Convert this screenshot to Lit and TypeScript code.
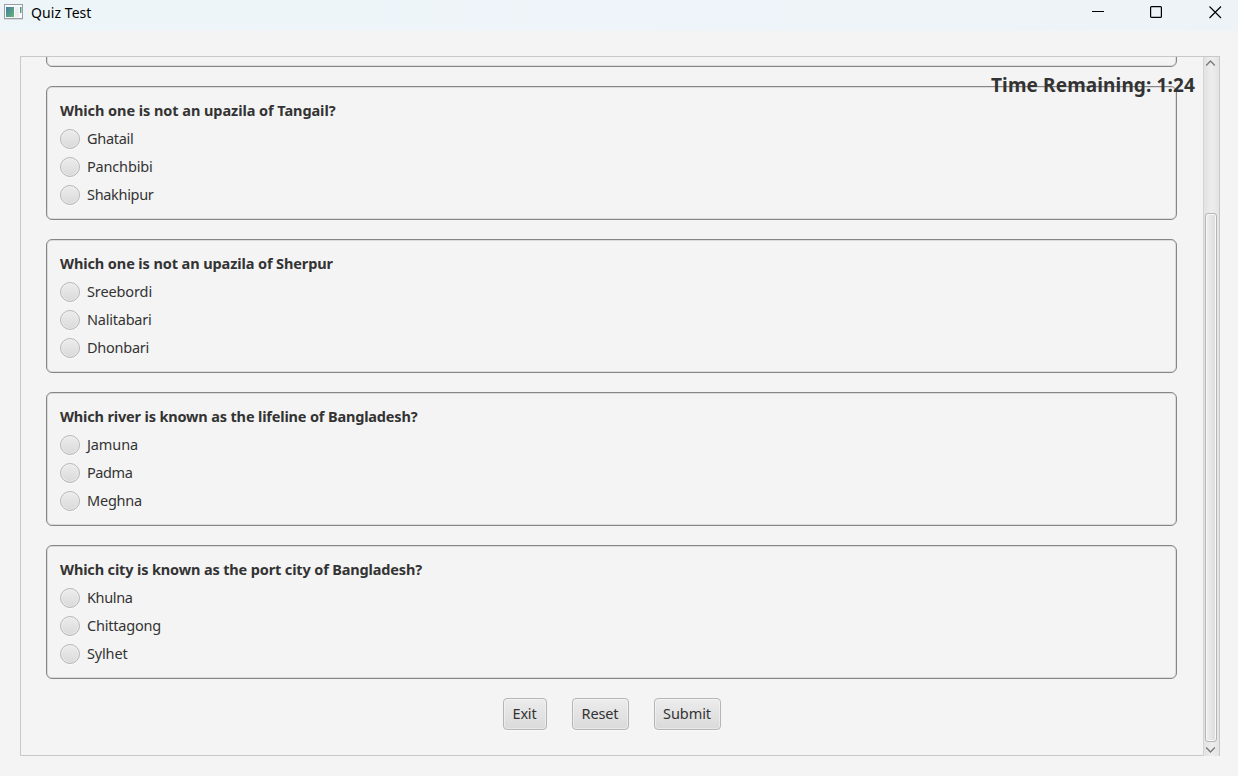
import { LitElement, html, css, svg } from "lit";
import { customElement } from "lit/decorators.js";

type Label = [text: string, width: number];

interface Question {
  title: Label;
  options: Label[];
}

const QUESTIONS: Question[] = [
  {
    title: ["Which one is not an upazila of Tangail?", 275.5],
    options: [["Ghatail", 46.5], ["Panchbibi", 65.5], ["Shakhipur", 66.5]],
  },
  {
    title: ["Which one is not an upazila of Sherpur", 273],
    options: [["Sreebordi", 65], ["Nalitabari", 64.5], ["Dhonbari", 62]],
  },
  {
    title: ["Which river is known as the lifeline of Bangladesh?", 357.5],
    options: [["Jamuna", 51], ["Padma", 45.5], ["Meghna", 55]],
  },
  {
    title: ["Which city is known as the port city of Bangladesh?", 362],
    options: [["Khulna", 45.5], ["Chittagong", 74], ["Sylhet", 40.5]],
  },
];

const ACTIONS: { label: Label; size: number }[] = [
  { label: ["Exit", 24], size: 44 },
  { label: ["Reset", 37], size: 57 },
  { label: ["Submit", 48], size: 67 },
];

// Text whose tracking is adjusted so that it fills a set width.
const fitted = ([text, width]: Label, cls = "") =>
  html`<span class="fit ${cls}" data-width=${width}>${text}</span>`;

@customElement("app-root")
export class AppRoot extends LitElement {
  static styles = css`
    :host {
      display: flex;
      flex-direction: column;
      height: 776px;
      overflow: hidden;
      background: #f4f4f4;
      color: #333;
      font: 14.5px/20px "Noto Sans", "Open Sans", sans-serif;
    }
    * { box-sizing: border-box; }
    svg { display: block; flex: none; }
    .fit { display: inline-block; white-space: pre; }
    .titlebar {
      display: flex;
      height: 31px;
      flex: none;
      background: linear-gradient(90deg, #eef5f9, #eef3f8);
      color: #000;
    }
    .app-icon { margin: 4px 8px 0 4px; }
    .caption { flex: 1; padding-top: 3px; font-size: 14px; }
    .window-controls { display: flex; gap: 46px; padding: 6px 16px 0 0; }
    .window-controls .close { margin-left: 1px; }
    .pane {
      position: relative;
      display: flex;
      width: 1200px;
      height: 700px;
      margin: 25px 0 0 20px;
      border: 1px solid #c8c8c8;
      border-right: 0;
    }
    .viewport {
      flex: 1;
      display: flex;
      flex-direction: column;
      justify-content: flex-end;
      gap: 19px;
      padding: 0 26px 25px 25px;
      overflow: hidden;
    }
    .card {
      display: flex;
      flex-direction: column;
      flex: none;
      height: 134px;
      padding: 13px 13px 0;
      border: 1px solid #868686;
      border-radius: 6px;
      box-shadow: inset 0 0 0 1px #dcdcdc;
    }
    .question { height: 24px; font-weight: 700; line-height: 20px; margin-bottom: 5px; }
    .option { display: flex; align-items: center; gap: 7px; height: 20px; margin-bottom: 8px; }
    .option .fit { line-height: 18px; padding-bottom: 2px; }
    .radio {
      width: 20px;
      height: 20px;
      border: 1px solid #b7b7b7;
      border-radius: 50%;
      background: linear-gradient(#ececec, #dadada);
      box-shadow: inset 0 0 0 1px rgba(255, 255, 255, 0.35), 0 1px 0 #fbfbfb;
    }
    .actions { display: flex; gap: 25px; justify-content: center; height: 32px; flex: none; }
    .action {
      height: 32px;
      padding: 0 0 2px;
      border: 1px solid #b5b5b5;
      border-radius: 4px;
      background: linear-gradient(#ececec, #dadada);
      box-shadow: inset 0 0 0 1px rgba(255, 255, 255, 0.4), 0 1px 0 #fafafa;
      font: inherit;
      color: inherit;
      line-height: 20px;
    }
    .timer {
      position: absolute;
      top: 15px;
      right: 25px;
      font-size: 19px;
      font-weight: 700;
      line-height: 26px;
    }
    .scrollbar {
      display: flex;
      flex-direction: column;
      align-items: flex-start;
      width: 17px;
      padding-left: 1px;
      border: 1px solid #c8c8c8;
      border-width: 0 1px;
      border-left-color: #d4d4d4;
      background: linear-gradient(90deg, #e2e2e2, #ededed 50%, #e4e4e4);
      margin-bottom: -1px;
    }
    .arrow-up { margin: 2px 0 0; }
    .thumb {
      width: 12px;
      height: 529px;
      margin: 146px 0 4px;
      border: 1px solid #b5b5b5;
      border-radius: 3px;
      background: linear-gradient(90deg, #efefef, #dcdcdc);
      box-shadow: inset 0 0 0 1px #f8f8f8;
    }
  `;

  updated() {
    this.renderRoot.querySelectorAll<HTMLElement>(".fit").forEach((el) => {
      el.style.letterSpacing = "0";
      const natural = el.getBoundingClientRect().width;
      const count = (el.textContent ?? "").length;
      el.style.letterSpacing = `${(Number(el.dataset.width) - natural) / count}px`;
    });
  }

  private chevron(points: string, cls: string) {
    return html`<svg class=${cls} width="11" height="8" viewBox="0 0 11 8">
      ${svg`<polyline points=${points} fill="none" stroke="#777" stroke-width="1.3" />`}
    </svg>`;
  }

  render() {
    return html`
      <header class="titlebar">
        <svg class="app-icon" width="19" height="16" viewBox="0 0 19 16">
          <defs>
            <linearGradient id="screen" x1="0" y1="0" x2="1" y2="1">
              <stop offset="0" stop-color="#4779a4" />
              <stop offset="1" stop-color="#60b876" />
            </linearGradient>
          </defs>
          <rect x="0.5" y="0.5" width="18" height="14" fill="#fafafa" stroke="#9a9fa6" />
          <path d="M0 15.5H19" stroke="#d5dade" />
          <rect x="2" y="3" width="8" height="10" fill="url(#screen)" />
          <rect x="11" y="3" width="4" height="10" fill="#eeeeee" />
          <rect x="16" y="3" width="1.5" height="6" fill="url(#screen)" />
        </svg>
        <div class="caption">${fitted(["Quiz Test", 60.5])}</div>
        <div class="window-controls">
          <svg width="12" height="13"><path d="M0 5.5H12" stroke="#000" /></svg>
          <svg width="12" height="13"><rect x="0.6" y="0.6" width="10.8" height="10.8" rx="1" fill="none" stroke="#000" stroke-width="1.2" /></svg>
          <svg class="close" width="13" height="13"><path d="M.5 .5L12 12M12 .5L.5 12" stroke="#000" stroke-width="1.15" /></svg>
        </div>
      </header>
      <main class="pane">
        <div class="viewport">
          <section class="card"></section>
          ${QUESTIONS.map(
            (q) => html`<section class="card">
              <div class="question">${fitted(q.title)}</div>
              ${q.options.map(
                (o) => html`<div class="option"><span class="radio"></span>${fitted(o)}</div>`,
              )}
            </section>`,
          )}
          <div class="actions">
            ${ACTIONS.map(
              (a) => html`<button class="action" style="width:${a.size}px">${fitted(a.label)}</button>`,
            )}
          </div>
        </div>
        <div class="scrollbar">
          ${this.chevron("1.2,6.5 5.5,2 9.8,6.5", "arrow-up")}
          <div class="thumb"></div>
          ${this.chevron("1.2,1.5 5.5,6 9.8,1.5", "arrow-down")}
        </div>
        <div class="timer">${fitted(["Time Remaining: 1:24", 204])}</div>
      </main>
    `;
  }
}
